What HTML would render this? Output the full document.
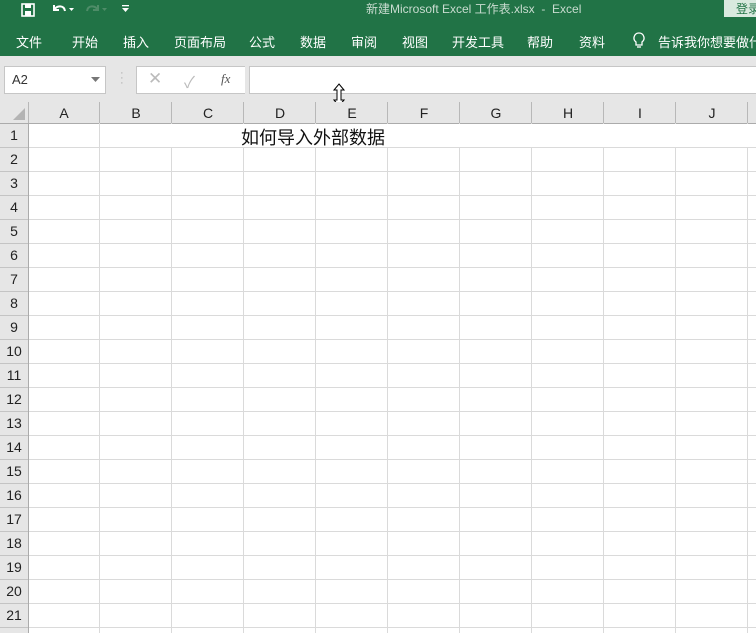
<!DOCTYPE html>
<html><head><meta charset="utf-8"><style>
body{margin:0;width:756px;height:633px;overflow:hidden;background:#fff;font-family:"Liberation Sans","Noto Sans CJK SC",sans-serif;position:relative}
.a{position:absolute}
.top{left:0;top:0;width:756px;height:56px;background:#217346;color:#fff;overflow:hidden}
.menu span{position:absolute;top:32px;font-size:13px;white-space:nowrap}
.fb{left:0;top:56px;width:756px;height:46px;background:#e6e6e6}
.box{background:#fff;border:1px solid #c6c6c6}
.ch{left:0;top:102px;width:756px;height:21px;background:#e6e6e6;border-bottom:1px solid #ababab}
.ch span{position:absolute;top:3px;font-size:14px;color:#222;width:72px;text-align:center}
.rh span{position:absolute;left:0;width:28px;text-align:center;font-size:14px;color:#222}
</style></head><body>
<div class="a top">
<svg class="a" style="left:20px;top:2px" width="16" height="16" viewBox="0 0 16 16"><rect x="2" y="2" width="12" height="12" fill="none" stroke="#fff" stroke-width="1.6"/><rect x="5" y="2" width="6" height="4" fill="#fff"/><rect x="5" y="9" width="6" height="5" fill="#fff"/></svg>
<svg class="a" style="left:50px;top:2px" width="26" height="14" viewBox="0 0 26 14"><path d="M4 3v5h5M4 8c3-5 10-5 11 1" fill="none" stroke="#fff" stroke-width="2"/><path d="M19 6h5l-2.5 3z" fill="#fff"/></svg>
<svg class="a" style="left:84px;top:2px" width="26" height="14" viewBox="0 0 26 14"><path d="M14 3v5h-5M14 8c-3-5-10-5-11 1" fill="none" stroke="#4e8c68" stroke-width="2"/><path d="M18 6h5l-2.5 3z" fill="#4e8c68"/></svg>
<svg class="a" style="left:121px;top:4px" width="10" height="10"><rect x="1" y="1" width="7" height="1.3" fill="#fff"/><path d="M1 4h7l-3.5 4z" fill="#fff"/></svg>
<div class="a" style="left:366px;top:0px;font-size:12px;color:#c9dcd0;white-space:nowrap">新建Microsoft Excel 工作表.xlsx &nbsp;-&nbsp; Excel</div>
<div class="a" style="left:724px;top:0;width:32px;height:17px;background:#d9e9df;color:#217346;font-size:12px;padding-left:12px;white-space:nowrap">登录</div>
<div class="menu"><span style="left:16px">文件</span><span style="left:72px">开始</span><span style="left:123px">插入</span><span style="left:174px">页面布局</span><span style="left:249px">公式</span><span style="left:300px">数据</span><span style="left:351px">审阅</span><span style="left:402px">视图</span><span style="left:452px">开发工具</span><span style="left:527px">帮助</span><span style="left:579px">资料</span><span style="left:658px">告诉我你想要做什么</span></div>
<svg class="a" style="left:631px;top:31px" width="16" height="20" viewBox="0 0 16 20"><path d="M8 2a5 5 0 0 0-3 9v3h6v-3a5 5 0 0 0-3-9z" fill="none" stroke="#fff" stroke-width="1.3"/><path d="M6 16h4" stroke="#fff" stroke-width="1.3"/></svg>
</div>
<div class="a fb">
<div class="a box" style="left:4px;top:10px;width:100px;height:26px"><span class="a" style="left:7px;top:5px;font-size:13px;color:#333">A2</span><svg class="a" style="left:86px;top:10px" width="9" height="6"><path d="M0 0h9l-4.5 5z" fill="#777"/></svg></div>
<div class="a" style="left:120px;top:15px;color:#aaa;font-size:11px;line-height:5px">·<br>·<br>·</div>
<div class="a box" style="left:136px;top:10px;width:108px;height:26px;border-right:none"><span class="a" style="left:11px;top:2px;font-size:17px;color:#bbb">✕</span><span class="a" style="left:47px;top:2px;font-size:16px;color:#bbb">✓</span><span class="a" style="left:84px;top:4px;font-size:13px;color:#555;font-family:'Liberation Serif',serif;font-style:italic">fx</span></div>
<div class="a box" style="left:249px;top:10px;width:510px;height:26px"></div>
<svg class="a" style="left:333px;top:27px" width="12" height="24" viewBox="0 0 12 24"><path d="M6 1l5 6H8v10h3l-5 6-5-6h3V7H1z" fill="#fff" stroke="#000"/></svg>
</div>
<div class="a ch">
<svg class="a" style="left:12px;top:5px" width="14" height="14"><path d="M13 1v12H1z" fill="#b4b4b4"/></svg>
<span style="left:28px">A</span><span style="left:100px">B</span><span style="left:172px">C</span><span style="left:244px">D</span><span style="left:316px">E</span><span style="left:388px">F</span><span style="left:460px">G</span><span style="left:532px">H</span><span style="left:604px">I</span><span style="left:676px">J</span>
</div>
<div class="a" style="left:0;top:124px;width:28px;height:509px;background:#e6e6e6;border-right:1px solid #ababab"></div>
<svg class="a" style="left:0;top:102px" width="756" height="531">
<g stroke="#dadada" stroke-width="1">
<path d="M99.5 0v531M171.5 0v531M243.5 0v531M315.5 0v531M387.5 0v531M459.5 0v531M531.5 0v531M603.5 0v531M675.5 0v531M747.5 0v531"/>
<path d="M29 45.5h727M29 69.5h727M29 93.5h727M29 117.5h727M29 141.5h727M29 165.5h727M29 189.5h727M29 213.5h727M29 237.5h727M29 261.5h727M29 285.5h727M29 309.5h727M29 333.5h727M29 357.5h727M29 381.5h727M29 405.5h727M29 429.5h727M29 453.5h727M29 477.5h727M29 501.5h727M29 525.5h727"/>
<path d="M0 45.5h28M0 69.5h28M0 93.5h28M0 117.5h28M0 141.5h28M0 165.5h28M0 189.5h28M0 213.5h28M0 237.5h28M0 261.5h28M0 285.5h28M0 309.5h28M0 333.5h28M0 357.5h28M0 381.5h28M0 405.5h28M0 429.5h28M0 453.5h28M0 477.5h28M0 501.5h28M0 525.5h28" stroke="#c4c4c4"/>
<path d="M99.5 0v21M171.5 0v21M243.5 0v21M315.5 0v21M387.5 0v21M459.5 0v21M531.5 0v21M603.5 0v21M675.5 0v21M747.5 0v21M28.5 0v21" stroke="#b8b8b8"/>
</g>
<rect x="100" y="22" width="656" height="23" fill="#fff"/>
</svg>
<div class="a rh">
<span style="top:127px">1</span><span style="top:151px">2</span><span style="top:175px">3</span><span style="top:199px">4</span><span style="top:223px">5</span><span style="top:247px">6</span><span style="top:271px">7</span><span style="top:295px">8</span><span style="top:319px">9</span><span style="top:343px">10</span><span style="top:367px">11</span><span style="top:391px">12</span><span style="top:415px">13</span><span style="top:439px">14</span><span style="top:463px">15</span><span style="top:487px">16</span><span style="top:511px">17</span><span style="top:535px">18</span><span style="top:559px">19</span><span style="top:583px">20</span><span style="top:607px">21</span>
</div>
<div class="a" style="left:241px;top:124px;font-size:18px;color:#111;white-space:nowrap">如何导入外部数据</div>
</body></html>
